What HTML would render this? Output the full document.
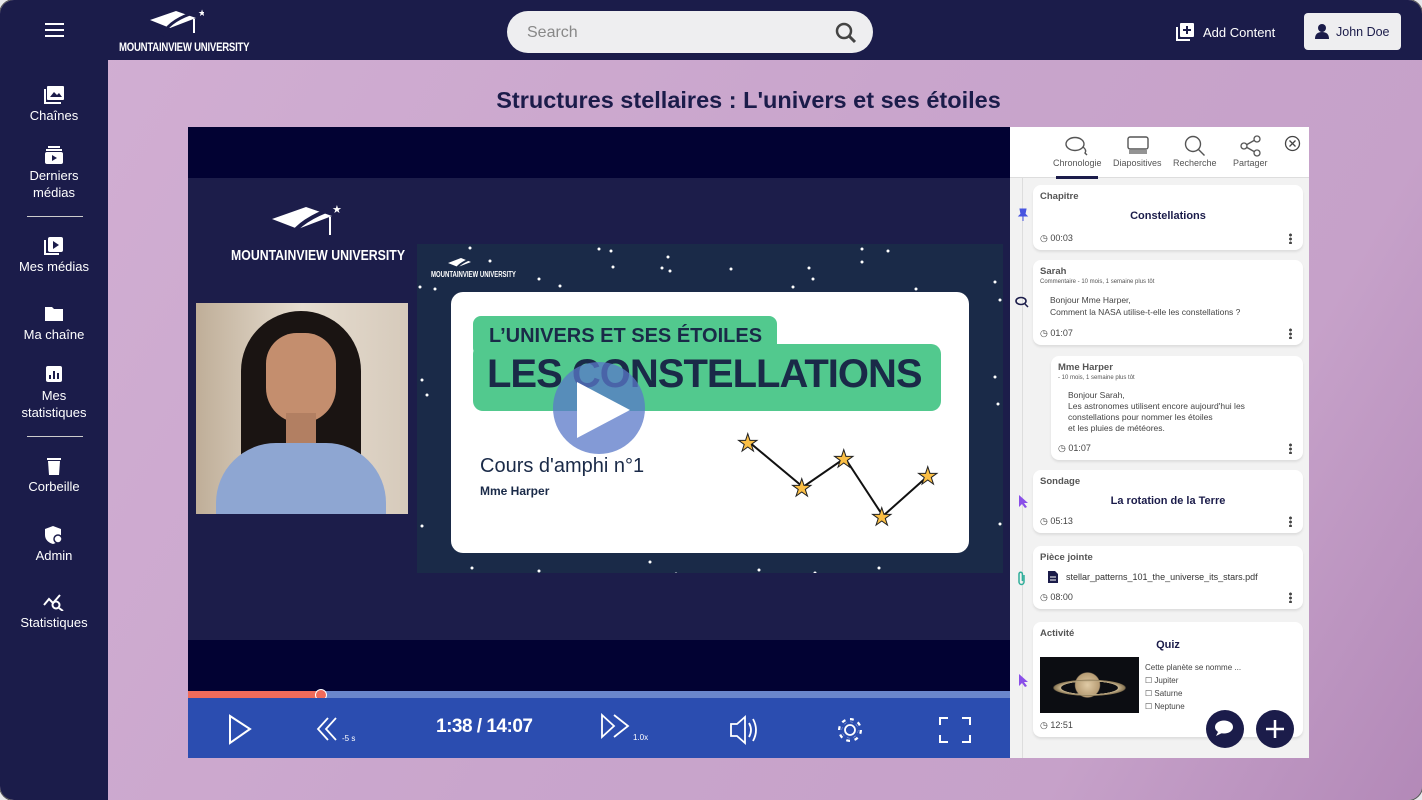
<!DOCTYPE html>
<html><head><meta charset="utf-8"><style>
*{margin:0;padding:0;box-sizing:border-box}
body{width:1422px;height:800px;overflow:hidden;background:#e8e8ec;font-family:"Liberation Sans",sans-serif}
.frame{position:absolute;left:0;top:0;width:1422px;height:800px;border-radius:14px;overflow:hidden;background:linear-gradient(120deg,#d2afd3 0%,#c9a5cc 50%,#c6a1c9 80%,#b389b8 100%);outline:1px solid #555}
.hdr{position:absolute;left:0;top:0;width:1422px;height:60px;background:#1b1c4a}
.side{position:absolute;left:0;top:60px;width:108px;height:740px;background:#1b1c4a}
.nav{position:absolute;left:0;width:108px;text-align:center;color:#fff;font-size:13px;line-height:17px}
.nav svg{display:block;margin:0 auto 3px}
.sep{position:absolute;left:27px;width:56px;height:1px;background:#ccc}
.card{position:absolute;left:1033px;width:270px;background:#fff;border-radius:8px;box-shadow:0 2px 2px #ddd;font-size:9px;color:#333}
.lbl{position:absolute;left:7px;top:6px;font-weight:bold;color:#555;font-size:9.5px}
.tm{position:absolute;left:7px;bottom:6px;font-size:9px;color:#444}
.dots{position:absolute;right:11px;bottom:6px;width:3px;height:11px;background:radial-gradient(circle,#444 1.3px,transparent 1.6px) 0 0/3px 4px}
.ctl{position:absolute;top:698px;color:#fff}
</style></head><body><div class="frame">
<div class="hdr">
 <div style="position:absolute;left:45px;top:23px;width:19px;height:2px;background:#fff;box-shadow:0 6px 0 #fff,0 12px 0 #fff"></div>
 <svg style="position:absolute;left:148px;top:8px" width="56" height="30"><polygon points="2,12 28,3 48,10 22,20" fill="#fff"/><path d="M14,28 Q20,14 42,6" stroke="#1b1c4a" stroke-width="3" fill="none"/><path d="M46,11 v14" stroke="#fff" stroke-width="2"/><text x="50" y="8" fill="#fff" font-size="9">★</text></svg>
 <div style="position:absolute;left:119px;top:40px;color:#fff;font-size:12px;font-weight:bold;letter-spacing:-.3px;transform:scaleX(.8);transform-origin:left;white-space:nowrap">MOUNTAINVIEW UNIVERSITY</div>
 <div style="position:absolute;left:507px;top:11px;width:366px;height:42px;border-radius:21px;background:#eeeef0"><span style="position:absolute;left:20px;top:13px;color:#888;font-size:16px">Search</span>
 <svg style="position:absolute;left:328px;top:11px" width="22" height="22"><circle cx="9" cy="9" r="7" stroke="#444" stroke-width="2.5" fill="none"/><path d="M14,14 l6,6" stroke="#444" stroke-width="3"/></svg></div>
 <svg style="position:absolute;left:1176px;top:23px" width="18" height="18"><rect x="4" y="0" width="14" height="14" fill="#fff" rx="1"/><path d="M11,3v8M7,7h8" stroke="#1b1c4a" stroke-width="2"/><path d="M1,4v13h13" stroke="#fff" stroke-width="2" fill="none"/></svg>
 <span style="position:absolute;left:1203px;top:25px;color:#fff;font-size:13px">Add Content</span>
 <div style="position:absolute;left:1304px;top:13px;width:97px;height:37px;background:#eeeef0;border-radius:4px"><svg style="position:absolute;left:11px;top:11px" width="16" height="15"><circle cx="7" cy="4" r="4" fill="#1b1c4a"/><path d="M0,15 Q0,8 7,8 Q14,8 14,15z" fill="#1b1c4a"/></svg><span style="position:absolute;left:32px;top:12px;font-size:12.5px;color:#1b1c4a">John Doe</span></div>
</div>
<div class="side">
 <div class="nav" style="top:26px"><svg width="20" height="18"><rect x="3" y="0" width="17" height="14" fill="#fff" rx="1"/><path d="M6,11l4-5 3,3 2-2 3,4z" fill="#1b1c4a"/><path d="M1,3v14h16" stroke="#fff" stroke-width="2" fill="none"/></svg>Chaînes</div>
 <div class="nav" style="top:86px"><svg width="20" height="18"><rect x="4" y="0" width="12" height="2" fill="#fff"/><rect x="2" y="3" width="16" height="2" fill="#fff"/><rect x="1" y="6" width="18" height="12" fill="#fff" rx="2"/><path d="M8,9l5,3-5,3z" fill="#1b1c4a"/></svg>Derniers<br>médias</div>
 <div class="sep" style="top:156px"></div>
 <div class="nav" style="top:177px"><svg width="20" height="18"><rect x="4" y="0" width="15" height="15" fill="#fff" rx="2"/><path d="M9,4l6,4-6,4z" fill="#1b1c4a"/><path d="M1,3v14h14" stroke="#fff" stroke-width="2" fill="none"/></svg>Mes médias</div>
 <div class="nav" style="top:245px"><svg width="20" height="18"><path d="M1,2h7l2,2h9v12h-18z" fill="#fff"/></svg>Ma chaîne</div>
 <div class="nav" style="top:306px"><svg width="20" height="18"><rect x="2" y="0" width="16" height="16" fill="#fff" rx="2"/><path d="M6,13v-4M10,13v-8M14,13v-6" stroke="#1b1c4a" stroke-width="2"/></svg>Mes<br>statistiques</div>
 <div class="sep" style="top:376px"></div>
 <div class="nav" style="top:397px"><svg width="20" height="18"><rect x="3" y="1" width="14" height="2" fill="#fff"/><path d="M4,4h12l-1,14h-10z" fill="#fff"/></svg>Corbeille</div>
 <div class="nav" style="top:466px"><svg width="20" height="18"><path d="M9,0l8,3v6c0,5-4,8-8,9c-4-1-8-4-8-9v-6z" fill="#fff"/><circle cx="14" cy="13" r="4" fill="#fff" stroke="#1b1c4a" stroke-width="1.5"/></svg>Admin</div>
 <div class="nav" style="top:533px"><svg width="22" height="18"><path d="M1,12l5-6 4,4 7-8" stroke="#fff" stroke-width="2" fill="none"/><circle cx="13" cy="12" r="3.5" stroke="#fff" stroke-width="2" fill="none"/><path d="M16,15l4,3" stroke="#fff" stroke-width="2"/></svg>Statistiques</div>
</div>
<div style="position:absolute;left:188px;top:87px;width:1121px;text-align:center;font-size:23.5px;font-weight:bold;color:#1b1c4a">Structures stellaires : L'univers et ses étoiles</div>
<!-- video -->
<div style="position:absolute;left:188px;top:127px;width:822px;height:571px;background:#020233"></div>
<div style="position:absolute;left:188px;top:178px;width:822px;height:462px;background:#1c1d4a"></div>
<svg style="position:absolute;left:270px;top:203px" width="72" height="40"><polygon points="2,16 36,4 62,13 28,26" fill="#fff"/><path d="M18,38 Q26,20 56,8" stroke="#1c1d4a" stroke-width="4" fill="none"/><path d="M60,14 v18" stroke="#fff" stroke-width="2"/><text x="62" y="10" fill="#fff" font-size="11">★</text></svg>
<div style="position:absolute;left:231px;top:247px;color:#fff;font-size:15px;font-weight:bold;transform:scaleX(.82);transform-origin:left;white-space:nowrap">MOUNTAINVIEW UNIVERSITY</div>
<div style="position:absolute;left:196px;top:303px;width:212px;height:211px;background:linear-gradient(90deg,#bfae98,#e6ddd0 50%,#d6cabb);overflow:hidden">
 <div style="position:absolute;left:45px;top:8px;width:120px;height:210px;border-radius:60px 60px 10px 10px;background:#1a1412"></div>
 <div style="position:absolute;left:70px;top:30px;width:70px;height:90px;border-radius:35px 35px 40px 40px;background:#c48e6e"></div>
 <div style="position:absolute;left:90px;top:110px;width:30px;height:40px;background:#b27f62"></div>
 <div style="position:absolute;left:20px;top:140px;width:170px;height:90px;border-radius:60px 60px 0 0;background:#8ea6d2"></div>
</div>
<div style="position:absolute;left:417px;top:244px;width:586px;height:329px;background:#1a2a48;overflow:hidden">
 <svg style="position:absolute;left:0;top:0" width="586" height="329"><g fill="#fff">
 <circle cx="53" cy="4" r="1.5"/><circle cx="73" cy="17" r="1.5"/><circle cx="3" cy="43" r="1.5"/><circle cx="18" cy="45" r="1.5"/><circle cx="122" cy="35" r="1.5"/><circle cx="143" cy="42" r="1.5"/><circle cx="182" cy="5" r="1.5"/><circle cx="194" cy="7" r="1.5"/><circle cx="196" cy="23" r="1.5"/><circle cx="251" cy="13" r="1.5"/><circle cx="245" cy="24" r="1.5"/><circle cx="253" cy="27" r="1.5"/><circle cx="314" cy="25" r="1.5"/><circle cx="392" cy="24" r="1.5"/><circle cx="376" cy="43" r="1.5"/><circle cx="396" cy="35" r="1.5"/><circle cx="445" cy="5" r="1.5"/><circle cx="471" cy="7" r="1.5"/><circle cx="445" cy="18" r="1.5"/><circle cx="499" cy="45" r="1.5"/><circle cx="513" cy="61" r="1.5"/><circle cx="5" cy="136" r="1.5"/><circle cx="10" cy="151" r="1.5"/><circle cx="514" cy="136" r="1.5"/><circle cx="508" cy="151" r="1.5"/><circle cx="5" cy="282" r="1.5"/><circle cx="513" cy="282" r="1.5"/><circle cx="55" cy="324" r="1.5"/><circle cx="233" cy="318" r="1.5"/><circle cx="259" cy="330" r="1.5"/><circle cx="342" cy="326" r="1.5"/><circle cx="462" cy="324" r="1.5"/><circle cx="578" cy="38" r="1.5"/><circle cx="583" cy="56" r="1.5"/><circle cx="581" cy="160" r="1.5"/><circle cx="583" cy="280" r="1.5"/><circle cx="578" cy="133" r="1.5"/><circle cx="122" cy="327" r="1.5"/><circle cx="398" cy="329" r="1.5"/>
 </g></svg>
 <svg style="position:absolute;left:30px;top:12px" width="30" height="18"><polygon points="1,7 14,2 24,6 11,11" fill="#fff"/><path d="M7,16 Q10,9 21,4" stroke="#1a2a48" stroke-width="2" fill="none"/></svg>
 <div style="position:absolute;left:14px;top:26px;color:#fff;font-size:8px;font-weight:bold;transform:scaleX(.75);transform-origin:left;white-space:nowrap">MOUNTAINVIEW UNIVERSITY</div>
 <div style="position:absolute;left:34px;top:48px;width:518px;height:261px;background:#fff;border-radius:12px">
  <div style="position:absolute;left:22px;top:24px;width:304px;height:40px;background:#52c98e;border-radius:8px"></div>
  <div style="position:absolute;left:22px;top:52px;width:468px;height:67px;background:#52c98e;border-radius:10px"></div>
  <div style="position:absolute;left:38px;top:33px;font-size:20px;font-weight:bold;color:#1a2a48">L’UNIVERS ET SES ÉTOILES</div>
  <div style="position:absolute;left:36px;top:60px;font-size:40px;font-weight:bold;color:#1a2a48;letter-spacing:-1px">LES CONSTELLATIONS</div>
  <div style="position:absolute;left:29px;top:163px;font-size:20px;color:#1a2a48">Cours d'amphi n°1</div>
  <div style="position:absolute;left:29px;top:192px;font-size:12px;font-weight:bold;color:#1a2a48">Mme Harper</div>
  <svg style="position:absolute;left:280px;top:130px" width="240" height="110"><polyline points="18,20 72,65 114,36 152,94 198,53" stroke="#111" stroke-width="2" fill="none"/><g fill="#fbbf45" stroke="#222" font-size="24"><text x="6" y="29">★</text><text x="60" y="74">★</text><text x="102" y="45">★</text><text x="140" y="103">★</text><text x="186" y="62">★</text></g></svg>
 </div>
 <div style="position:absolute;left:136px;top:118px;width:92px;height:92px;border-radius:50%;background:rgba(90,120,200,.75)"></div>
 <svg style="position:absolute;left:158px;top:136px" width="70" height="60"><path d="M2,2 L2,58 L55,30z" fill="#fff"/></svg>
</div>
<div style="position:absolute;left:188px;top:691px;width:822px;height:7px;background:#6a86cc"></div>
<div style="position:absolute;left:188px;top:691px;width:133px;height:7px;background:#f06b5b"></div>
<div style="position:absolute;left:315px;top:689px;width:12px;height:12px;border-radius:50%;background:#f06b5b;border:1.5px solid #fff"></div>
<div style="position:absolute;left:188px;top:698px;width:822px;height:60px;background:#2b4db0"></div>
<svg class="ctl" style="left:228px;top:714px" width="24" height="32"><path d="M2,2 L22,15 L2,29z" stroke="#fff" stroke-width="2" fill="none"/></svg>
<svg class="ctl" style="left:316px;top:716px" width="44" height="30"><path d="M12,2 L2,13 L12,24 M20,2 L10,13 L20,24" stroke="#fff" stroke-width="1.8" fill="none"/><text x="26" y="25" fill="#fff" font-size="8">-5 s</text></svg>
<div class="ctl" style="left:436px;top:716px;font-size:19px;font-weight:bold;letter-spacing:-.5px">1:38 / 14:07</div>
<svg class="ctl" style="left:600px;top:713px" width="55" height="30"><path d="M2,2 L14,13 L2,24z M14,2 L28,13 L14,24" stroke="#fff" stroke-width="1.8" fill="none"/><text x="33" y="27" fill="#fff" font-size="8">1.0x</text></svg>
<svg class="ctl" style="left:729px;top:714px" width="32" height="32"><path d="M2,10h6l8-7v26l-8-7h-6z" stroke="#fff" stroke-width="1.8" fill="none"/><path d="M20,9 Q24,16 20,23 M24,5 Q30,16 24,27" stroke="#fff" stroke-width="1.8" fill="none"/></svg>
<svg class="ctl" style="left:835px;top:715px" width="30" height="30"><circle cx="15" cy="15" r="5" stroke="#fff" stroke-width="1.8" fill="none"/><circle cx="15" cy="15" r="10" stroke="#fff" stroke-width="4" stroke-dasharray="3.5 4.3" fill="none"/><circle cx="15" cy="15" r="9" stroke="#2b4db0" stroke-width="1.5" fill="none"/></svg>
<svg class="ctl" style="left:938px;top:716px" width="34" height="28"><path d="M2,9V2h8M24,2h8v7M32,19v7h-8M10,26H2v-7" stroke="#fff" stroke-width="2" fill="none"/></svg>
<!-- panel -->
<div style="position:absolute;left:1010px;top:127px;width:299px;height:631px;background:#f2f2f2"></div>
<div style="position:absolute;left:1010px;top:127px;width:299px;height:51px;background:#fff;border-bottom:1px solid #ddd;font-size:9px;color:#555">
 <svg style="position:absolute;left:55px;top:9px" width="24" height="20"><ellipse cx="10" cy="8" rx="9" ry="6.5" stroke="#555" stroke-width="1.4" fill="none"/><path d="M18,11 Q22,14 20,17 L22,19" stroke="#555" stroke-width="1.4" fill="none"/></svg>
 <span style="position:absolute;left:43px;top:31px">Chronologie</span>
 <div style="position:absolute;left:46px;top:49px;width:42px;height:3px;background:#1b1c4a"></div>
 <svg style="position:absolute;left:117px;top:9px" width="22" height="18"><rect x="1" y="1" width="20" height="12" rx="2" stroke="#555" stroke-width="1.4" fill="none"/><path d="M2,15h18M2,17h18" stroke="#555" stroke-width="1.2"/></svg>
 <span style="position:absolute;left:103px;top:31px">Diapositives</span>
 <svg style="position:absolute;left:174px;top:8px" width="22" height="22"><circle cx="9" cy="9" r="7.5" stroke="#555" stroke-width="1.4" fill="none"/><path d="M14.5,14.5l6,6" stroke="#555" stroke-width="1.4"/></svg>
 <span style="position:absolute;left:163px;top:31px">Recherche</span>
 <svg style="position:absolute;left:230px;top:8px" width="22" height="22"><circle cx="4" cy="11" r="3" stroke="#555" stroke-width="1.3" fill="none"/><circle cx="17" cy="4" r="3" stroke="#555" stroke-width="1.3" fill="none"/><circle cx="17" cy="18" r="3" stroke="#555" stroke-width="1.3" fill="none"/><path d="M7,9.5l7-4M7,12.5l7,4" stroke="#555" stroke-width="1.3"/></svg>
 <span style="position:absolute;left:223px;top:31px">Partager</span>
 <svg style="position:absolute;left:274px;top:8px" width="17" height="17"><circle cx="8.5" cy="8.5" r="7" stroke="#444" stroke-width="1.3" fill="none"/><path d="M5.5,5.5l6,6M11.5,5.5l-6,6" stroke="#444" stroke-width="1.3"/></svg>
</div>
<div style="position:absolute;left:1022px;top:178px;width:1px;height:580px;background:#ddd"></div>
<div class="card" style="top:185px;height:65px"><div class="lbl">Chapitre</div><div style="position:absolute;left:0;right:0;top:25px;text-align:center;font-weight:bold;font-size:11px;color:#1b1c4a">Constellations</div><div class="tm">◷ 00:03</div><div class="dots"></div></div>
<div class="card" style="top:260px;height:85px"><div class="lbl">Sarah</div><div style="position:absolute;left:7px;top:19px;font-size:6px;color:#555">Commentaire - 10 mois, 1 semaine plus tôt</div><div style="position:absolute;left:17px;top:34px;font-size:8.5px;line-height:12px;color:#444">Bonjour Mme Harper,<br>Comment la NASA utilise-t-elle les constellations ?</div><div class="tm">◷ 01:07</div><div class="dots"></div></div>
<div class="card" style="left:1051px;width:252px;top:356px;height:104px"><div class="lbl">Mme Harper</div><div style="position:absolute;left:7px;top:19px;font-size:6px;color:#555">- 10 mois, 1 semaine plus tôt</div><div style="position:absolute;left:17px;top:34px;font-size:8.5px;line-height:11px;color:#444">Bonjour Sarah,<br>Les astronomes utilisent encore aujourd'hui les<br>constellations pour nommer les étoiles<br>et les pluies de météores.</div><div class="tm">◷ 01:07</div><div class="dots"></div></div>
<div class="card" style="top:470px;height:63px"><div class="lbl">Sondage</div><div style="position:absolute;left:0;right:0;top:25px;text-align:center;font-weight:bold;font-size:11px;color:#1b1c4a">La rotation de la Terre</div><div class="tm">◷ 05:13</div><div class="dots"></div></div>
<div class="card" style="top:546px;height:63px"><div class="lbl">Pièce jointe</div><svg style="position:absolute;left:14px;top:24px" width="12" height="14"><path d="M1,1h7l3,3v9h-10z" fill="#1b1c4a"/><path d="M3,7h6M3,10h6" stroke="#fff"/></svg><div style="position:absolute;left:33px;top:26px;font-size:9px;color:#333">stellar_patterns_101_the_universe_its_stars.pdf</div><div class="tm">◷ 08:00</div><div class="dots"></div></div>
<div class="card" style="top:622px;height:115px"><div class="lbl">Activité</div><div style="position:absolute;left:0;right:0;top:17px;text-align:center;font-weight:bold;font-size:11px;color:#1b1c4a">Quiz</div>
 <div style="position:absolute;left:7px;top:35px;width:99px;height:56px;background:radial-gradient(ellipse 40px 9px at 50% 55%,transparent 70%,#c8b48e 72%,#8a7755 88%,transparent 92%),radial-gradient(circle at 48% 50%,#e0cba6 0,#b79c74 12px,transparent 13px),#0c0d12"></div>
 <div style="position:absolute;left:112px;top:39px;font-size:8px;line-height:13px;color:#444">Cette planète se nomme ...<br>☐ Jupiter<br>☐ Saturne<br>☐ Neptune</div>
 <div class="tm">◷ 12:51</div></div>
<svg style="position:absolute;left:1017px;top:208px" width="12" height="13"><path d="M3,1h6l-1,5 2,2h-8l2-2z M6,8v5" fill="#4754e0" stroke="#4754e0"/></svg>
<svg style="position:absolute;left:1015px;top:296px" width="14" height="12"><ellipse cx="6" cy="5" rx="5" ry="3.5" stroke="#1b1c4a" stroke-width="1.6" fill="none"/><path d="M10,8l3,3" stroke="#1b1c4a" stroke-width="1.5"/></svg>
<svg style="position:absolute;left:1018px;top:494px" width="11" height="14"><path d="M1,1v12l3-3 3,4 2-1-3-4h4z" fill="#8a4fe8"/></svg>
<svg style="position:absolute;left:1018px;top:673px" width="11" height="14"><path d="M1,1v12l3-3 3,4 2-1-3-4h4z" fill="#8a4fe8"/></svg>
<svg style="position:absolute;left:1017px;top:571px" width="10" height="15"><path d="M7,4v7a2.5,2.5 0 0 1-5,0v-8a1.7,1.7 0 0 1 3.4,0v7" stroke="#2fae9a" stroke-width="1.5" fill="none"/></svg>
<div style="position:absolute;left:1206px;top:710px;width:38px;height:38px;border-radius:50%;background:#1b1c4a"><svg style="position:absolute;left:8px;top:9px" width="22" height="20"><ellipse cx="10" cy="8" rx="9" ry="6.5" fill="#fff"/><path d="M4,13l-2,4 6-3z" fill="#fff"/></svg></div>
<div style="position:absolute;left:1256px;top:710px;width:38px;height:38px;border-radius:50%;background:#1b1c4a"><svg style="position:absolute;left:9px;top:9px" width="20" height="20"><path d="M10,1v18M1,10h18" stroke="#fff" stroke-width="2.5"/></svg></div>
</div></body></html>
